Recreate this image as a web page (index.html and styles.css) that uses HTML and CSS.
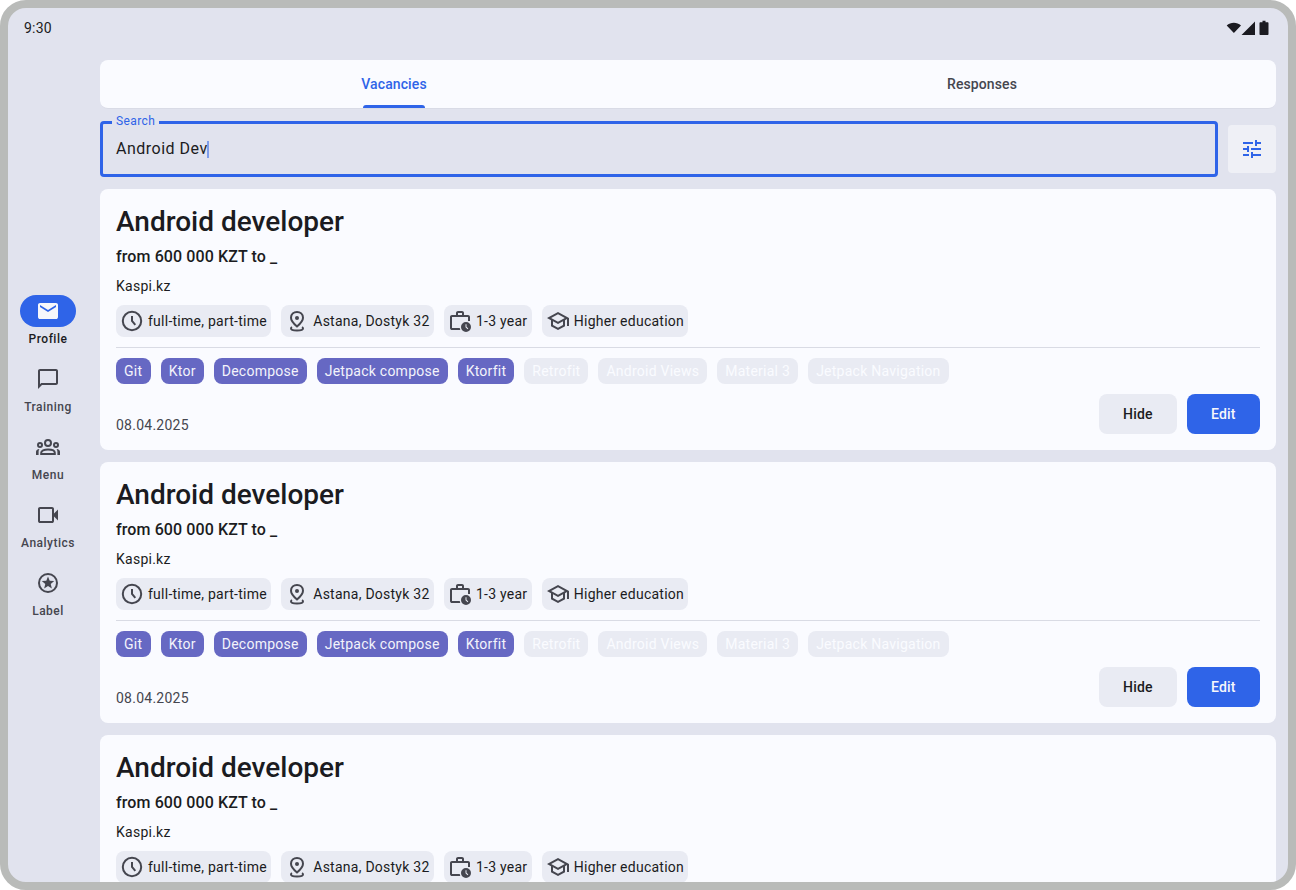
FILE: index.html
```html
<!DOCTYPE html>
<html lang="en">
<head>
<meta charset="utf-8">
<title>Vacancies</title>
<link rel="stylesheet" href="styles.css">
</head>
<body>
<svg class="sprite" aria-hidden="true">
  <symbol id="mail" viewBox="0 0 24 24"><path d="M4 20c-.55 0-1.02-.2-1.41-.59A1.93 1.93 0 0 1 2 18V6c0-.55.2-1.02.59-1.41C2.98 4.2 3.45 4 4 4h16c.55 0 1.02.2 1.41.59.39.39.59.86.59 1.41v12c0 .55-.2 1.02-.59 1.41-.39.39-.86.59-1.41.59H4Zm8-7 8-5V6l-8 5-8-5v2l8 5Z"/></symbol>
  <symbol id="chat" viewBox="0 0 24 24"><path d="M20 2H4c-1.100 0-2 .9-2 2v18l4-4h14c1.100 0 2-.9 2-2V4c0-1.100-.9-2-2-2zm0 14H5.200L4 17.200V4h16v12z"/></symbol>
  <symbol id="groups" viewBox="0 0 24 24"><g fill="none" stroke="currentColor" stroke-width="2"><circle cx="12" cy="8" r="3"/><circle cx="4" cy="10" r="2"/><circle cx="20" cy="10" r="2"/><path d="M5.200 19v-1.200c0-2 2.800-3.300 6.800-3.300s6.800 1.300 6.800 3.300V19Z"/></g><path d="M0 20v-3.200c0-1.500 1.200-2.500 3.400-2.800-.5.800-.8 1.700-.8 2.700V20ZM24 20v-3.200c0-1.500-1.200-2.500-3.400-2.800.5.800.8 1.700.8 2.700V20Z"/></symbol>
  <symbol id="video" viewBox="0 0 24 24"><path d="M4 20c-.55 0-1.020-.2-1.410-.59A1.930 1.930 0 0 1 2 18V6c0-.55.2-1.020.59-1.410C2.980 4.200 3.450 4 4 4h12c.55 0 1.020.2 1.410.59.39.39.59.86.59 1.410v4.500l4-4v11l-4-4V18c0 .55-.2 1.020-.59 1.410-.39.39-.86.59-1.410.59H4Zm0-2h12V6H4v12Z"/></symbol>
  <symbol id="stars" viewBox="0 0 24 24"><circle cx="12" cy="12" r="9" fill="none" stroke="currentColor" stroke-width="2"/><path d="M12 5.500 13.700 9.700 18.200 10.050 14.750 13 15.850 17.400 12 15.050 8.150 17.400 9.250 13 5.800 10.050 10.300 9.700Z"/></symbol>
  <symbol id="tune" viewBox="0 0 24 24"><path d="M3 17v2h6v-2H3zM3 5v2h10V5H3zm10 16v-2h8v-2h-8v-2h-2v6h2zM7 9v2H3v2h4v2h2V9H7zm14 4v-2H11v2h10zm-6-4h2V7h4V5h-4V3h-2v6z"/></symbol>
  <symbol id="clock" viewBox="0 0 24 24"><g fill="none" stroke="currentColor" stroke-width="2"><circle cx="12" cy="12" r="9.200"/><path d="M12 7v5l3.300 3.800"/></g></symbol>
  <symbol id="pin" viewBox="0 0 24 24"><g fill="none" stroke="currentColor" stroke-width="2"><path d="M12 17.400c-4-3.300-6-6.100-6-8.700C6 5.200 8.700 3 12 3s6 2.200 6 5.700c0 2.600-2 5.400-6 8.700Z"/><path d="M7 18.200c-.7.400-1 .8-1 1.300 0 1.200 2.700 2 6 2s6-.8 6-2c0-.5-.3-.9-1-1.300"/></g><circle cx="12" cy="9" r="2"/></symbol>
  <symbol id="work" viewBox="0 0 24 24"><path d="M4 21c-.55 0-1.020-.2-1.410-.59A1.930 1.930 0 0 1 2 19V8c0-.55.2-1.020.59-1.410C2.980 6.200 3.450 6 4 6h4V4c0-.55.2-1.020.59-1.410C8.980 2.200 9.450 2 10 2h4c.55 0 1.020.2 1.410.59.39.39.59.86.59 1.410v2h4c.55 0 1.020.2 1.410.59.39.39.59.86.59 1.410v4h-2V8H4v11h7.800c.1.700.2 1.300.5 2H4Zm6-15h4V4h-4v2Z"/><path fill-rule="evenodd" d="M18 13a5 5 0 1 0 0 10 5 5 0 0 0 0-10Zm-.5 2.200h1v2.600l1.800 1.800-.7.700-2.100-2.100v-3Z"/></symbol>
  <symbol id="school" viewBox="0 0 24 24"><path d="m12 21-7-3.800v-6L1 9l11-6 11 6v8h-2v-6.900l-2 1.100v6L12 21Zm0-8.300L18.850 9 12 5.300 5.150 9 12 12.700Zm0 6.025 5-2.700V12.250L12 15l-5-2.750v3.775l5 2.700Z"/></symbol>
</svg>

<div class="device">
  <header class="status">
    <span>9:30</span>
    <svg class="status-icons" viewBox="0 0 44 16" width="44" height="16"><path d="M.7 5.400C4.700 2 11 2 15 5.400L7.900 13ZM29 1.500V15H15.500ZM35 2.200h1.500V.8h3v1.400H41.500c.6 0 1 .4 1 1V14c0 .6-.4 1-1 1h-7c-.6 0-1-.4-1-1V3.200c0-.6.4-1 1-1Z"/></svg>
  </header>
  <div class="body">
    <nav class="rail">
      <a class="item active"><span class="pill"><svg class="icon"><use href="#mail"/></svg></span>Profile</a>
      <a class="item"><span class="pill"><svg class="icon"><use href="#chat"/></svg></span>Training</a>
      <a class="item"><span class="pill"><svg class="icon"><use href="#groups"/></svg></span>Menu</a>
      <a class="item"><span class="pill"><svg class="icon"><use href="#video"/></svg></span>Analytics</a>
      <a class="item"><span class="pill"><svg class="icon"><use href="#stars"/></svg></span>Label</a>
    </nav>
    <main class="main">
      <div class="tabs">
        <div class="tab selected"><span>Vacancies</span></div>
        <div class="tab"><span>Responses</span></div>
      </div>
      <div class="search-row">
        <div class="field"><span class="field-label">Search</span><span class="value">Android Dev</span><i class="caret"></i></div>
        <div class="filter"><svg class="icon"><use href="#tune"/></svg></div>
      </div>
      <div class="cards">
        <article class="card">
          <h2 class="title">Android developer</h2>
          <p class="salary">from 600 000 KZT to _</p>
          <p class="company">Kaspi.kz</p>
          <div class="facts">
            <span class="fact"><svg class="icon"><use href="#clock"/></svg>full-time, part-time</span>
            <span class="fact"><svg class="icon"><use href="#pin"/></svg>Astana, Dostyk 32</span>
            <span class="fact"><svg class="icon"><use href="#work"/></svg>1-3 year</span>
            <span class="fact"><svg class="icon"><use href="#school"/></svg>Higher education</span>
          </div>
          <div class="tags">
            <span class="tag">Git</span><span class="tag">Ktor</span><span class="tag">Decompose</span><span class="tag">Jetpack compose</span><span class="tag">Ktorfit</span><span class="tag off">Retrofit</span><span class="tag off">Android Views</span><span class="tag off">Material 3</span><span class="tag off">Jetpack Navigation</span>
          </div>
          <div class="foot"><span class="date">08.04.2025</span><span class="btn">Hide</span><span class="btn primary">Edit</span></div>
        </article>
        <article class="card">
          <h2 class="title">Android developer</h2>
          <p class="salary">from 600 000 KZT to _</p>
          <p class="company">Kaspi.kz</p>
          <div class="facts">
            <span class="fact"><svg class="icon"><use href="#clock"/></svg>full-time, part-time</span>
            <span class="fact"><svg class="icon"><use href="#pin"/></svg>Astana, Dostyk 32</span>
            <span class="fact"><svg class="icon"><use href="#work"/></svg>1-3 year</span>
            <span class="fact"><svg class="icon"><use href="#school"/></svg>Higher education</span>
          </div>
          <div class="tags">
            <span class="tag">Git</span><span class="tag">Ktor</span><span class="tag">Decompose</span><span class="tag">Jetpack compose</span><span class="tag">Ktorfit</span><span class="tag off">Retrofit</span><span class="tag off">Android Views</span><span class="tag off">Material 3</span><span class="tag off">Jetpack Navigation</span>
          </div>
          <div class="foot"><span class="date">08.04.2025</span><span class="btn">Hide</span><span class="btn primary">Edit</span></div>
        </article>
        <article class="card">
          <h2 class="title">Android developer</h2>
          <p class="salary">from 600 000 KZT to _</p>
          <p class="company">Kaspi.kz</p>
          <div class="facts">
            <span class="fact"><svg class="icon"><use href="#clock"/></svg>full-time, part-time</span>
            <span class="fact"><svg class="icon"><use href="#pin"/></svg>Astana, Dostyk 32</span>
            <span class="fact"><svg class="icon"><use href="#work"/></svg>1-3 year</span>
            <span class="fact"><svg class="icon"><use href="#school"/></svg>Higher education</span>
          </div>
        </article>
      </div>
    </main>
  </div>
</div>
</body>
</html>
```
FILE: styles.css
```css
* { box-sizing: border-box; margin: 0; }
body { background: #fff; font: 400 14px/20px Roboto, sans-serif; letter-spacing: .25px; color: #1b1b21; }
.sprite { display: none; }
.icon { display: block; flex: none; width: 24px; height: 24px; fill: currentColor; }

.device { display: flex; flex-direction: column; width: 1296px; height: 890px; border: 8px solid #b9bbb9; border-radius: 26px; background: #e1e3ee; overflow: hidden; }
.status { display: flex; flex: none; justify-content: space-between; align-items: center; height: 40px; padding: 0 18px 0 16px; letter-spacing: .2px; }
.status-icons { fill: #1b1b21; }
.body { display: flex; flex: 1; min-height: 0; }

.rail { display: flex; flex: none; flex-direction: column; gap: 16px; width: 80px; padding-top: 247px; font-size: 12px; line-height: 16px; font-weight: 500; letter-spacing: .5px; color: #45464f; }
.item { display: flex; flex-direction: column; align-items: center; gap: 4px; }
.pill { display: flex; align-items: center; justify-content: center; width: 56px; height: 32px; border-radius: 16px; }
.active { color: #1b1b21; }
.active .pill { background: #2f64e8; color: #f6f7fb; }

.main { display: flex; flex: 1; flex-direction: column; min-width: 0; padding: 12px 12px 0; }
.tabs { display: flex; flex: none; height: 49px; border-bottom: 1px solid #d9dbe6; border-radius: 8px; background: #fafbff; font-weight: 500; letter-spacing: .1px; color: #45464f; }
.tab { display: flex; flex: 1; justify-content: center; }
.tab span { display: flex; align-items: center; height: 48px; }
.selected { color: #2f64e8; }
.selected span { position: relative; }
.selected span::after { content: ""; position: absolute; left: 2px; right: 2px; bottom: 0; height: 3px; border-radius: 3px 3px 0 0; background: #2f64e8; }

.search-row { display: flex; flex: none; align-items: center; gap: 10px; margin-top: 12px; }
.field { position: relative; display: flex; flex: 1; align-items: center; height: 56px; padding: 0 13px; border: 3px solid #2f64e8; border-radius: 4px; font-size: 16px; line-height: 24px; letter-spacing: .5px; }
.field-label { position: absolute; left: 9px; top: -11px; padding: 0 4px; background: #e1e3ee; color: #2f64e8; font-size: 12px; line-height: 16px; letter-spacing: .4px; }
.caret { width: 2px; height: 17px; margin-left: -1px; background: #2f64e8; opacity: .55; }
.filter { display: flex; align-items: center; justify-content: center; width: 48px; height: 48px; border-radius: 4px; background: #eff0f6; color: #2f64e8; }

.cards { display: flex; flex: 1; flex-direction: column; gap: 12px; min-height: 0; margin-top: 12px; overflow: hidden; }
.card { flex: none; height: 261px; padding: 15px 16px 16px; border-radius: 8px; background: #fafbff; }
.title { font-size: 28px; line-height: 36px; font-weight: 500; letter-spacing: 0; }
.salary { margin-top: 5px; font-size: 16px; line-height: 24px; font-weight: 500; letter-spacing: .11px; }
.company { margin-top: 7px; }
.facts { display: flex; gap: 10px; margin-top: 9px; }
.fact { display: flex; align-items: center; gap: 4px; height: 32px; padding: 0 4.4px 0 4px; border-radius: 8px; background: #e9ebf3; }
.fact .icon { color: #45464f; }
.tags { display: flex; gap: 10px; margin-top: 10px; padding-top: 10px; border-top: 1px solid #d9dbe4; }
.tag { height: 26px; padding: 3px 8px; border-radius: 8px; background: #6668c3; color: #f3f3fb; letter-spacing: .25px; }
.tag:first-child { padding-right: 8.5px; }
.off { background: #e9ebf3; color: #fafbff; }
.foot { display: flex; align-items: center; gap: 10px; height: 40px; margin-top: 10px; }
.date { flex: 1; padding-top: 22px; color: #45464f; }
.btn { min-width: 78px; height: 40px; padding: 10px 24px; border-radius: 8px; background: #e9ebf3; font-weight: 500; letter-spacing: .2px; }
.primary { min-width: 73px; background: #2f64e8; color: #f6f7fb; }
```
